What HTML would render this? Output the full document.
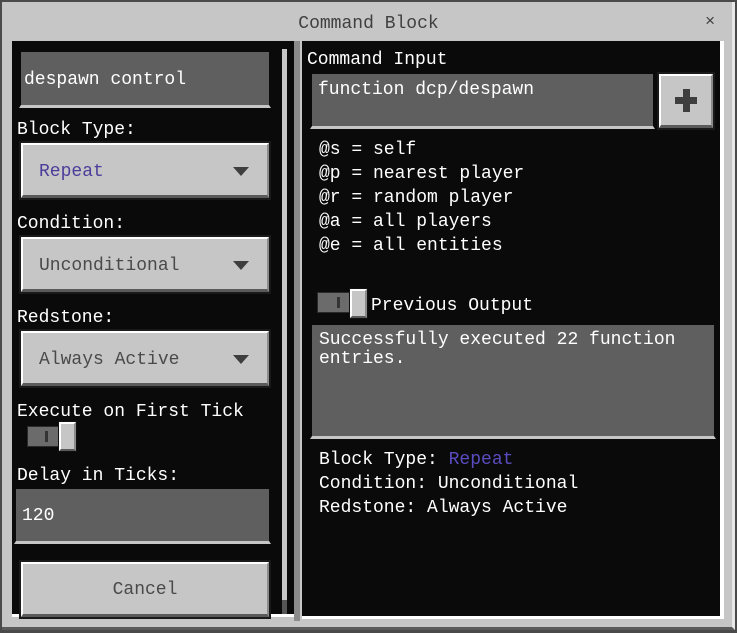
<!DOCTYPE html><html><head><style>
*{margin:0;padding:0;box-sizing:border-box}
body{width:737px;height:633px;background:#3a3a3a;position:relative;overflow:hidden;font-family:"Liberation Mono",monospace;font-size:18px}
div{position:absolute}
.t{color:#fff;white-space:nowrap;line-height:20px;margin-top:2px}
.fld{background:#5f5f5f;border:2px solid #0a0a0a;border-bottom:3px solid #c6c6c6;box-shadow:0 2px 0 #0a0a0a}
.dd{background:#c6c6c6;border-top:2px solid #fff;border-left:2px solid #fff;border-bottom:3px solid #5a5a5a;border-right:2px solid #8b8b8b;outline:2px solid #1a1a1a}
.arr{width:0;height:0;border-left:8px solid transparent;border-right:8px solid transparent;border-top:9px solid #3e3e3e}
</style></head><body>
<div style="left:0;top:0;width:737px;height:633px;background:#4a4a4a"></div>
<div style="left:2px;top:2px;width:733px;height:628px;background:#c6c6c6;border-right:3px solid #e8e8e8;border-bottom:3px solid #5a5a5a"></div>
<div class="t" style="left:0;width:737px;top:12px;text-align:center;color:#404040">Command Block</div>
<div class="t" style="left:705px;top:11px;color:#404040;font-size:17px">×</div>
<div style="left:12px;top:41px;width:284px;height:576px;background:#0a0a0a;border-bottom:3px solid #fff"></div>
<div style="left:282px;top:49px;width:5px;height:560px;background:#c6c6c6"></div>
<div style="left:282px;top:600px;width:5px;height:14px;background:#555"></div>
<div style="left:294px;top:41px;width:6px;height:580px;background:#8b8b8b"></div>
<div style="left:302px;top:41px;width:422px;height:578px;background:#0a0a0a;border-right:4px solid #fff;border-bottom:3px solid #fff"></div>

<div class="fld" style="left:19px;top:50px;width:252px;height:58px"></div>
<div class="t" style="left:24px;top:68px">despawn control</div>

<div class="t" style="left:17px;top:118px">Block Type:</div>
<div class="dd" style="left:21px;top:143px;width:248px;height:55px"></div>
<div class="t" style="left:39px;top:160px;color:#4b3d9a">Repeat</div>
<div class="arr" style="left:233px;top:167px"></div>

<div class="t" style="left:17px;top:212px">Condition:</div>
<div class="dd" style="left:21px;top:237px;width:248px;height:55px"></div>
<div class="t" style="left:39px;top:254px;color:#4a4a4a">Unconditional</div>
<div class="arr" style="left:233px;top:261px"></div>

<div class="t" style="left:17px;top:306px">Redstone:</div>
<div class="dd" style="left:21px;top:331px;width:248px;height:55px"></div>
<div class="t" style="left:39px;top:348px;color:#4a4a4a">Always Active</div>
<div class="arr" style="left:233px;top:355px"></div>

<div class="t" style="left:17px;top:400px">Execute on First Tick</div>
<div style="left:27px;top:426px;width:34px;height:21px;background:#6b6b6b;border:1px solid #2a2a2a"></div>
<div style="left:45px;top:431px;width:3px;height:11px;background:#333"></div>
<div style="left:59px;top:422px;width:17px;height:29px;background:#c6c6c6;border:2px solid #fff;border-bottom-color:#5a5a5a;border-right-color:#8b8b8b;outline:1px solid #111"></div>

<div class="t" style="left:17px;top:464px">Delay in Ticks:</div>
<div class="fld" style="left:14px;top:487px;width:257px;height:57px"></div>
<div class="t" style="left:22px;top:504px">120</div>

<div class="dd" style="left:21px;top:562px;width:248px;height:55px"></div>
<div class="t" style="left:19px;width:252px;top:578px;text-align:center;color:#4a4a4a">Cancel</div>

<div class="t" style="left:307px;top:48px">Command Input</div>
<div class="fld" style="left:310px;top:72px;width:345px;height:57px"></div>
<div class="t" style="left:318px;top:78px">function dcp/despawn</div>
<div class="dd" style="left:659px;top:74px;width:54px;height:54px"></div>
<div style="left:675px;top:97px;width:22px;height:7px;background:#3e3e3e"></div>
<div style="left:683px;top:89px;width:7px;height:23px;background:#3e3e3e"></div>

<div class="t" style="left:319px;top:138px">@s = self</div>
<div class="t" style="left:319px;top:162px">@p = nearest player</div>
<div class="t" style="left:319px;top:186px">@r = random player</div>
<div class="t" style="left:319px;top:210px">@a = all players</div>
<div class="t" style="left:319px;top:234px">@e = all entities</div>

<div style="left:317px;top:292px;width:34px;height:21px;background:#6b6b6b;border:1px solid #2a2a2a"></div>
<div style="left:337px;top:297px;width:3px;height:11px;background:#333"></div>
<div style="left:350px;top:289px;width:17px;height:29px;background:#c6c6c6;border:2px solid #fff;border-bottom-color:#5a5a5a;border-right-color:#8b8b8b;outline:1px solid #111"></div>
<div class="t" style="left:371px;top:294px">Previous Output</div>

<div class="fld" style="left:310px;top:323px;width:406px;height:116px"></div>
<div class="t" style="left:319px;top:328px">Successfully executed 22 function</div>
<div class="t" style="left:319px;top:347px">entries.</div>

<div class="t" style="left:319px;top:448px">Block Type: <span style="color:#5a4cc0">Repeat</span></div>
<div class="t" style="left:319px;top:472px">Condition: Unconditional</div>
<div class="t" style="left:319px;top:496px">Redstone: Always Active</div>
</body></html>
